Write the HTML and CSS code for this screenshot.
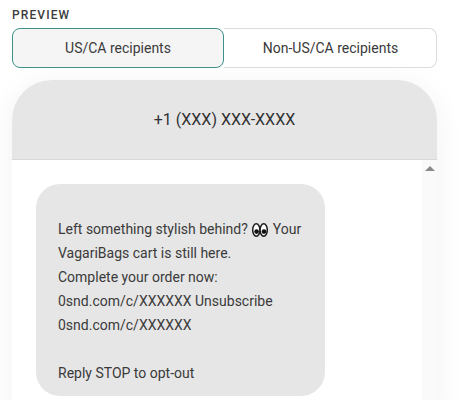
FILE: index.html
```html
<!DOCTYPE html>
<html lang="en">
<head>
<meta charset="utf-8">
<title>Preview</title>
<link rel="stylesheet" href="styles.css">
</head>
<body>
<div class="preview">
  <div class="label">PREVIEW</div>
  <div class="tabs">
    <button class="tab tab-active">US/CA recipients</button>
    <button class="tab tab-other">Non-US/CA recipients</button>
  </div>
  <div class="phone">
    <div class="phone-head">+1 (XXX) XXX-XXXX</div>
    <div class="phone-body">
      <div class="messages">
        <div class="bubble">Left something stylish behind? <svg class="eyes" viewBox="0 0 16 14" width="16" height="14" aria-hidden="true"><ellipse cx="4.3" cy="7" rx="3.6" ry="6.2" fill="#fff" stroke="#1c1c1c" stroke-width="1.5"/><ellipse cx="11.7" cy="7" rx="3.6" ry="6.2" fill="#fff" stroke="#1c1c1c" stroke-width="1.5"/><circle cx="4.6" cy="8.6" r="2.3" fill="#111"/><circle cx="12" cy="8.6" r="2.3" fill="#111"/></svg> Your<br>VagariBags cart is still here.<br>Complete your order now:<br>0snd.com/c/XXXXXX Unsubscribe<br>0snd.com/c/XXXXXX<br><br>Reply STOP to opt-out</div>
      </div>
      <div class="scrollbar"><span class="arrow"></span></div>
    </div>
  </div>
</div>
</body>
</html>
```
FILE: styles.css
```css
* { box-sizing: border-box; }
html, body { margin: 0; height: 400px; overflow: hidden; background: #fff; }
body { font-family: Roboto, "Liberation Sans", sans-serif; color: #2b2b2b; }
.preview { padding: 9px 30px 0 12px; }
.label { font-size: 12px; line-height: 13px; font-weight: 500; letter-spacing: 1.1px; color: #3c3c3c; margin-bottom: 6px; }
.tabs { display: flex; height: 40px; }
.tab { flex: 1 1 50%; font: 14px/20px Roboto, "Liberation Sans", sans-serif; color: #3a3a3a; background: #fff; border: 1px solid #dcdcdc; padding: 0; }
.tab-active { background: #f5f5f5; border-color: #3f8f8a; border-radius: 8px; flex-basis: 212px; }
.tab-other { border-left: 0; border-radius: 0 8px 8px 0; flex-basis: 213px; padding-left: 1px; }
.phone { margin-top: 12px; height: 340px; border-radius: 40px 40px 0 0; box-shadow: 0 4px 30px rgba(0,0,0,.06); background: #fff; }
.phone-head { height: 80px; background: #e6e6e6; border-bottom: 1px solid #d8d8d8; border-radius: 40px 40px 0 0; display: flex; align-items: center; justify-content: center; font-size: 16px; color: #333; }
.phone-body { display: flex; height: 260px; }
.messages { flex: 1; padding: 24px 0 0 24px; }
.bubble { width: 289px; height: 212px; padding: 33px 10px 11px 22px; border-radius: 24px; background: #e6e6e6; font-size: 14px; line-height: 24px; color: #3a3a3a; }
.eyes { vertical-align: -3px; margin: 0 1.5px 0 0.5px; }
.scrollbar { width: 15px; background: #fafafa; display: flex; justify-content: center; padding-top: 6px; align-items: flex-start; }
.arrow { width: 0; height: 0; border-left: 5px solid transparent; border-right: 5px solid transparent; border-bottom: 5px solid #8a8a8a; }
```
